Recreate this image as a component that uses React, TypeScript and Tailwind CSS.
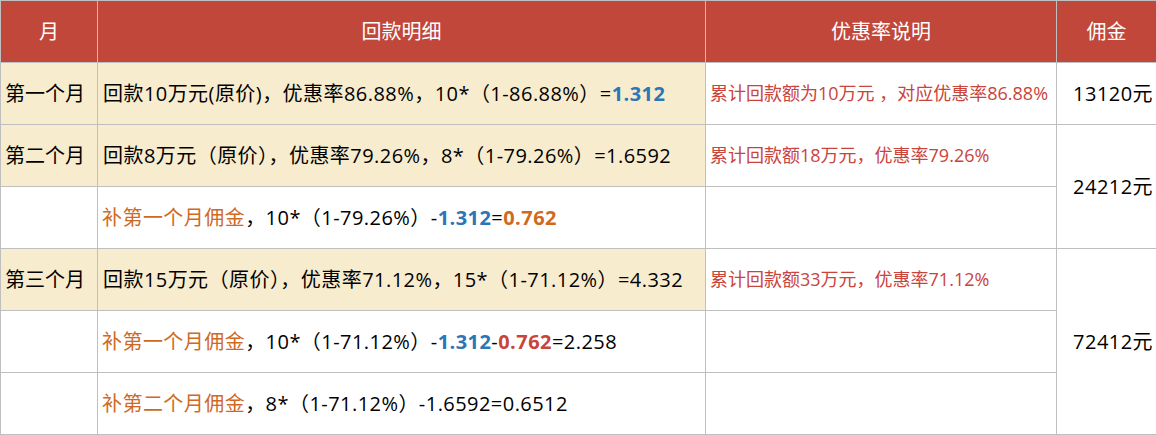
import React from "react";

const border = "border border-[#bfbfbf]";
const beige = "bg-[#f7ecce]";
const detail = "tracking-[0.45px]";

function Blue({ children }: { children: React.ReactNode }) {
  return <b className="font-bold text-[#2e75b6]">{children}</b>;
}

export default function App() {
  return (
    <div
      className="w-[1156px] h-[435px] bg-white text-[20px] text-black"
      style={{ fontFamily: '"Open Sans", "Noto Sans CJK SC", sans-serif' }}
    >
      <table className="table-fixed border-collapse w-[1156px]">
        <colgroup>
          <col className="w-[97px]" />
          <col className="w-[608px]" />
          <col className="w-[351px]" />
          <col className="w-[100px]" />
        </colgroup>
        <thead>
          <tr className="h-[62px] bg-[#c0473a] text-white">
            <th className={`${border} font-normal`}>月</th>
            <th className={`${border} font-normal`}>回款明细</th>
            <th className={`${border} font-normal`}>优惠率说明</th>
            <th className={`${border} font-normal`}>佣金</th>
          </tr>
        </thead>
        <tbody className="whitespace-pre">
          {/* 第一个月 */}
          <tr className="h-[62px]">
            <td className={`${border} ${beige} pl-1`}>第一个月</td>
            <td className={`${border} ${beige} ${detail} pl-[5px]`}>
              回款10万元(原价)，优惠率86.88%，10*（1-86.88%）=<Blue>1.312</Blue>
            </td>
            <td className={`${border} pl-[4px] text-[18px] text-[#c9443b]`}>
              累计回款额为10万元 ，对应优惠率86.88%
            </td>
            <td className={`${border} ${detail} pr-[3px] text-right`}>13120元</td>
          </tr>

          {/* 第二个月 */}
          <tr className="h-[62px]">
            <td className={`${border} ${beige} pl-1`}>第二个月</td>
            <td className={`${border} ${beige} ${detail} pl-[5px]`}>
              回款8万元（原价），优惠率79.26%，8*（1-79.26%）=1.6592
            </td>
            <td className={`${border} pl-[4px] text-[18px] text-[#c9443b]`}>
              累计回款额18万元，优惠率79.26%
            </td>
            <td rowSpan={2} className={`${border} ${detail} pr-[3px] text-right`}>
              24212元
            </td>
          </tr>
          <tr className="h-[62px]">
            <td className={border}></td>
            <td className={`${border} ${detail} pl-[4px]`}>
              <span className="text-[#d0691f]">补第一个月佣金</span>，10*（1-79.26%）-
              <Blue>1.312</Blue>=<b className="font-bold text-[#d0691f]">0.762</b>
            </td>
            <td className={border}></td>
          </tr>

          {/* 第三个月 */}
          <tr className="h-[62px]">
            <td className={`${border} ${beige} pl-1`}>第三个月</td>
            <td className={`${border} ${beige} ${detail} pl-[5px]`}>
              回款15万元（原价），优惠率71.12%，15*（1-71.12%）=4.332
            </td>
            <td className={`${border} pl-[4px] text-[18px] text-[#c9443b]`}>
              累计回款额33万元，优惠率71.12%
            </td>
            <td rowSpan={3} className={`${border} ${detail} pr-[3px] text-right`}>
              72412元
            </td>
          </tr>
          <tr className="h-[62px]">
            <td className={border}></td>
            <td className={`${border} ${detail} pl-[4px]`}>
              <span className="text-[#d0691f]">补第一个月佣金</span>，10*（1-71.12%）-
              <Blue>1.312</Blue>-<b className="font-bold text-[#c8453a]">0.762</b>=2.258
            </td>
            <td className={border}></td>
          </tr>
          <tr className="h-[62px]">
            <td className={border}></td>
            <td className={`${border} ${detail} pl-[4px]`}>
              <span className="text-[#d0691f]">补第二个月佣金</span>，8*（1-71.12%）-1.6592=0.6512
            </td>
            <td className={border}></td>
          </tr>
        </tbody>
      </table>
    </div>
  );
}
